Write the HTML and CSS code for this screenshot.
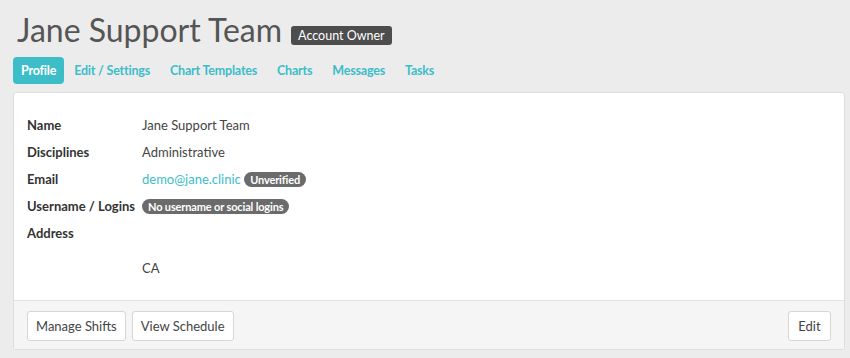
FILE: index.html
```html
<!DOCTYPE html>
<html lang="en">
<head>
  <meta charset="UTF-8">
  <meta name="viewport" content="width=device-width, initial-scale=1.0">
  <title>Jane Support Team - Profile</title>
  <link rel="stylesheet" href="styles.css">
</head>
<body>
  <div class="page">
    <h1 class="title">Jane Support Team <span class="owner-badge">Account Owner</span></h1>

    <ul class="tabs">
      <li class="active"><a href="#">Profile</a></li>
      <li><a href="#">Edit / Settings</a></li>
      <li><a href="#">Chart Templates</a></li>
      <li><a href="#">Charts</a></li>
      <li><a href="#">Messages</a></li>
      <li><a href="#">Tasks</a></li>
    </ul>

    <div class="panel">
      <div class="panel-body">
        <dl class="details">
          <dt>Name</dt>
          <dd>Jane Support Team</dd>
          <dt>Disciplines</dt>
          <dd>Administrative</dd>
          <dt>Email</dt>
          <dd><a href="#" class="link">demo@jane.clinic</a> <span class="pill">Unverified</span></dd>
          <dt>Username / Logins</dt>
          <dd><span class="pill">No username or social logins</span></dd>
          <dt>Address</dt>
          <dd class="address"><br>CA</dd>
        </dl>
      </div>
      <div class="panel-footer">
        <div class="btn-group">
          <button class="btn">Manage Shifts</button>
          <button class="btn">View Schedule</button>
        </div>
        <button class="btn btn-edit">Edit</button>
      </div>
    </div>
  </div>
</body>
</html>
```

FILE: styles.css
```css
body {
  margin: 0;
  background: #ececec;
  font-family: Lato, "Noto Sans", sans-serif;
  color: #333;
}
.page {
  padding: 12px 5px 0 13px;
}
.title {
  margin: 0 0 0 4px;
  font-weight: 400;
  font-size: 32px;
  line-height: 36px;
  color: #555;
  display: flex;
  align-items: center;
}
.owner-badge {
  margin-left: 9px;
  margin-top: 11px;
  background: #4d4d4d;
  color: #fff;
  font-size: 12.5px;
  line-height: 19px;
  padding: 0 7px;
  border-radius: 3px;
}
.tabs {
  list-style: none;
  margin: 9px 0 8px;
  padding: 0;
  display: flex;
}
.tabs li a {
  display: block;
  padding: 0 10px;
  line-height: 27px;
  font-size: 12.5px;
  letter-spacing: -0.2px;
  font-weight: 700;
  color: #3cbdc8;
  text-decoration: none;
  border-radius: 4px;
}
.tabs li.active a {
  background: #3cbdc8;
  color: #fff;
  padding: 0 8px;
}
.panel {
  background: #fff;
  border: 1px solid #ddd;
  border-radius: 3px;
  width: 830px;
}
.panel-body {
  padding: 23px 13px 22px;
}
.details {
  margin: 0;
  display: grid;
  grid-template-columns: 115px 1fr;
  row-gap: 8px;
  font-size: 13px;
  line-height: 19px;
}
.details dt {
  font-weight: 700;
  color: #333;
}
.details dd {
  margin: 0;
  color: #444;
}
.details .address {
  padding-top: 16px;
}
.link {
  color: #3cbdc8;
  text-decoration: none;
}
.pill {
  display: inline-block;
  background: #6b6b6b;
  color: #fff;
  font-size: 11px;
  letter-spacing: -0.15px;
  font-weight: 700;
  line-height: 15px;
  padding: 0 6px;
  border-radius: 8px;
}
.panel-footer {
  background: #f5f5f5;
  border-top: 1px solid #e2e2e2;
  padding: 10px 13px 8px;
  display: flex;
  justify-content: space-between;
}
.btn-group {
  display: flex;
  gap: 6px;
}
.btn {
  font-family: inherit;
  font-size: 13px;
  color: #444;
  background: #fff;
  border: 1px solid #d6d6d6;
  border-radius: 3px;
  height: 30px;
  padding: 0 8px;
}
.btn-edit {
  min-width: 43px;
}
```
